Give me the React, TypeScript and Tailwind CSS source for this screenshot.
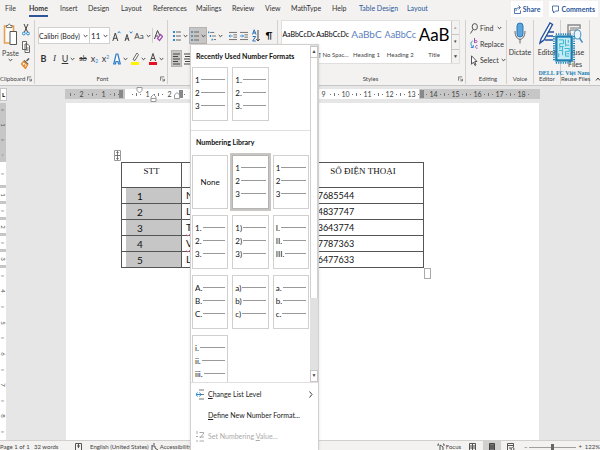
import React from 'react';

interface TabItem {
  label: string;
  active?: boolean;
  contextual?: boolean;
}

const TABS: TabItem[] = [
  { label: 'File' },
  { label: 'Home', active: true },
  { label: 'Insert' },
  { label: 'Design' },
  { label: 'Layout' },
  { label: 'References' },
  { label: 'Mailings' },
  { label: 'Review' },
  { label: 'View' },
  { label: 'MathType' },
  { label: 'Help' },
  { label: 'Table Design', contextual: true },
  { label: 'Layout', contextual: true },
];

const STYLES = [
  { sample: 'AaBbCcDc', name: '¶ Normal', cls: 'text-[7px] text-black' },
  { sample: 'AaBbCcDc', name: '¶ No Spac...', cls: 'text-[7px] text-black' },
  { sample: 'AaBbC', name: 'Heading 1', cls: 'text-[10px] text-[#5a80bd]' },
  { sample: 'AaBbCc', name: 'Heading 2', cls: 'text-[9px] text-[#5a80bd]' },
  { sample: 'AaB', name: 'Title', cls: 'text-[17px] text-black' },
];

const ROWS = [
  { id: 1, name: 'Nam', phone: '0387685544' },
  { id: 2, name: 'Lan', phone: '0344837747' },
  { id: 3, name: 'Thu', phone: '0973643774', typo: true },
  { id: 4, name: 'Vinh', phone: '0347787363', typo: true },
  { id: 5, name: 'Linh', phone: '0386477633' },
];

const RECENT = [
  ['1', '2', '3'],
  ['1.', '2.', '3.'],
];

const LIBRARY = [
  [],
  ['1', '2', '3'],
  ['1', '2', '3'],
  ['1.', '2.', '3.'],
  ['1)', '2)', '3)'],
  ['I.', 'II.', 'III.'],
  ['A.', 'B.', 'C.'],
  ['a)', 'b)', 'c)'],
  ['a.', 'b.', 'c.'],
  ['i.', 'ii.', 'iii.'],
];

const RULER = ['2', '1', '', '1', '2', '3', '4', '5', '6', '7', '8', '9', '10', '11', '12', '13', '14', '15', '16', '17', '18'];

const Chevron = () => (
  <svg width="5" height="4" viewBox="0 0 5 4" className="shrink-0" fill="none" stroke="#444" strokeWidth="1">
    <path d="M.7 1 2.5 2.8 4.3 1" />
  </svg>
);

const Launcher = () => (
  <button aria-label="More options" className="absolute right-[2px] bottom-[2px]">
    <svg width="5" height="6" viewBox="0 0 6 6" fill="none" stroke="#555" strokeWidth=".9">
      <path d="M.5 5V.5H5M2.3 2.3 5 5M5.3 2.8v2.5H2.8" />
    </svg>
  </button>
);

interface GroupProps {
  label: string;
  className?: string;
  launcher?: boolean;
  children: React.ReactNode;
}

const Group: React.FC<GroupProps> = ({ label, className = '', launcher, children }) => (
  <section className={`relative flex shrink-0 flex-col border-r border-[#d2d0ce] ${className}`}>
    <div className="flex-1">{children}</div>
    <div className="h-[11px] text-center text-[6px] leading-[11px] whitespace-nowrap text-[#444]">{label}</div>
    {launcher && <Launcher />}
  </section>
);

interface ToolProps {
  label: string;
  className?: string;
  menu?: boolean;
  children: React.ReactNode;
}

const Tool: React.FC<ToolProps> = ({ label, className = 'w-[11px]', menu, children }) => (
  <button aria-label={label} className={`flex h-[17px] shrink-0 items-center justify-center gap-[2px] ${className}`}>
    {children}
    {menu && <Chevron />}
  </button>
);

const ListIcon = ({ dots }: { dots: string }) => (
  <svg width="8" height="12" viewBox="0 0 8 12" className="shrink-0">
    <path d="M0 2h2M0 6h2M0 10h2" stroke={dots} strokeWidth="2" />
    <path d="M3 2H8M3 6H8M3 10H8" stroke="#666" />
  </svg>
);

const IndentIcon = ({ flip }: { flip?: boolean }) => (
  <svg width="8" height="10" viewBox="0 0 9 10">
    <path d="M0 1h9M5 3.7h4M5 6.3h4M0 9h9" stroke="#666" />
    <path d={flip ? 'M0 5h4M2.5 3.5 4 5 2.5 6.5' : 'M4 5H0M1.5 3.5 0 5l1.5 1.5'} stroke="#2b8ad0" fill="none" />
  </svg>
);

const Ribbon = () => (
  <div className="flex h-[68px] shrink-0 border-b border-[#c8c6c4] bg-[#f3f2f1] pt-[2px] pb-[1px]">
    <Group label="Clipboard" launcher className="w-[35px] pr-[9px]">
      <div className="flex pt-[3px]">
        <button className="flex w-[21px] shrink-0 flex-col items-center text-[7px] leading-[9px] text-[#444]">
          <svg width="15" height="23" viewBox="0 0 15 23" fill="none">
            <path d="M1.500 3h9v17h-9z" stroke="#e8a04c" strokeWidth="1.600" fill="#fafafa" />
            <path d="M3.500 4.500V2.500h1.500C5 .6 7.500.6 7.500 2.500H9v2z" fill="#fff" stroke="#666" strokeWidth=".9" />
            <path d="M7 8.500h6.500v13H7z" fill="#fff" stroke="#555" />
          </svg>
          <span className="pt-[3px]">Paste</span>
          <Chevron />
        </button>
        <div className="flex flex-col items-center gap-[5px] pt-[1px]">
          <button aria-label="Cut">
            <svg width="8" height="12" viewBox="0 0 8 12" fill="none">
              <path d="M2 0 5.500 8M6 0 2.500 8" stroke="#444" />
              <circle cx="1.800" cy="9.500" r="1.400" stroke="#2b8ad0" />
              <circle cx="6" cy="9.500" r="1.400" stroke="#2b8ad0" />
            </svg>
          </button>
          <button aria-label="Copy">
            <svg width="8" height="12" viewBox="0 0 8 12" fill="#fff" stroke="#555" strokeWidth=".9">
              <path d="M.5.5h4v8h-4zM3 3h2.500l2 2v6.500H3z" />
              <path d="M4 7h2.500M4 9h2.500" />
            </svg>
          </button>
          <button aria-label="Format Painter">
            <svg width="9" height="11" viewBox="0 0 9 11">
              <path d="M5.500 3 8 .500" stroke="#555" strokeWidth="1.500" />
              <path d="M3 2.500 7 6.500" stroke="#555" strokeWidth="1.500" />
              <path d="M2.500 3.500.500 6l4 4.500L6.500 7z" fill="#fff" stroke="#e58a2c" strokeWidth="1.300" />
              <path d="M1.500 7.500 4 6l1 3z" fill="#e58a2c" />
            </svg>
          </button>
        </div>
      </div>
    </Group>

    <Group label="Font" launcher className="w-[133px] pl-[3px]">
      <div className="flex flex-col gap-[6px] pt-[7px]">
        <div className="flex items-center">
          <div className="relative flex h-[17px] w-[52px] items-center border border-[#d2d0ce] bg-white">
            <select aria-label="Font" className="w-full appearance-none text-[7px] leading-[14px] text-[#222]">
              <option>Calibri (Body)</option>
            </select>
            <span className="pointer-events-none absolute right-[1px]"><Chevron /></span>
          </div>
          <div className="relative flex h-[17px] w-[20px] items-center border border-l-0 border-[#d2d0ce] bg-white">
            <select aria-label="Font Size" className="w-full appearance-none px-[1px] text-[8px] leading-[14px] text-[#222]">
              <option>11</option>
            </select>
            <span className="pointer-events-none absolute right-[1px]"><Chevron /></span>
          </div>
          <Tool label="Grow Font" className="w-[12px]">
            <svg width="9" height="12" viewBox="0 0 9 12" fill="none">
              <path d="M.8 11 3.300 3 5.800 11M1.600 8.300H5" stroke="#444" />
              <path d="m5.800 3.200 1.300-1.700 1.300 1.700" stroke="#2b8ad0" />
            </svg>
          </Tool>
          <Tool label="Shrink Font" className="w-[12px]">
            <svg width="9" height="12" viewBox="0 0 9 12" fill="none">
              <path d="M1 11 3 4.500 5 11M1.700 8.800h2.600" stroke="#444" />
              <path d="m5.800 1.500 1.300 1.700 1.300-1.700" stroke="#2b8ad0" />
            </svg>
          </Tool>
          <Tool label="Change Case" className="w-[17px]" menu>
            <span className="text-[8px] text-[#444]">Aa</span>
          </Tool>
          <div className="ml-[1px] h-[15px] w-px bg-[#d2d0ce]" />
          <Tool label="Clear Formatting" className="w-[10px]">
            <svg width="9" height="13" viewBox="0 0 9 13" fill="none">
              <path d="M.5 10 3.500 1.500 6 7M1.500 7H4" stroke="#444" />
              <path d="m3.500 9.500 3-4L8.500 7.500l-3 4z" fill="#fff" stroke="#a24fb4" strokeWidth="1.300" />
            </svg>
          </Tool>
        </div>
        <div className="flex items-center text-[9px] text-[#333]">
          <Tool label="Bold"><b>B</b></Tool>
          <Tool label="Italic"><i className="font-['Liberation_Serif',serif]">I</i></Tool>
          <Tool label="Underline" className="w-[17px]" menu><u>U</u></Tool>
          <Tool label="Strikethrough" className="w-[12px]"><s className="text-[7px]">ab</s></Tool>
          <Tool label="Subscript"><span>x<sub className="text-[5px] text-[#2b8ad0]">2</sub></span></Tool>
          <Tool label="Superscript"><span>x<sup className="text-[5px] text-[#2b8ad0]">2</sup></span></Tool>
          <Tool label="Text Effects" className="w-[18px]" menu>
            <svg width="8" height="12" viewBox="0 0 8 12" fill="#fff" stroke="#2a7cc7" strokeWidth="1.200" strokeLinejoin="round">
              <path d="M.7 11 3.200 1h1.600l2.500 10H5.600L5 8.500H3L2.400 11z" />
            </svg>
          </Tool>
          <Tool label="Text Highlight Color" className="w-[18px]" menu>
            <svg width="8" height="13" viewBox="0 0 8 13">
              <path d="M2 7.500 6 1l1.500 1.500L4 8.500z" fill="#fff" stroke="#666" />
              <path d="M0 11.500h8" stroke="#fff200" strokeWidth="3" />
            </svg>
          </Tool>
          <Tool label="Font Color" className="w-[18px]" menu>
            <svg width="8" height="13" viewBox="0 0 8 13" fill="none">
              <path d="M1.500 9 4 1.500 6.500 9M2.300 6.500h3.400" stroke="#444" />
              <path d="M0 11.500h8" stroke="#e81123" strokeWidth="3" />
            </svg>
          </Tool>
        </div>
      </div>
    </Group>

    <Group label="Paragraph" className="w-[110px] pl-[3px]">
      <div className="flex flex-col gap-[6px] pt-[7px]">
        <div className="flex items-center">
          <Tool label="Bullets" className="w-[18px]" menu><ListIcon dots="#2b8ad0" /></Tool>
          <Tool label="Numbering" className="w-[18px] border border-[#b5b3b1] bg-[#c8c6c4]" menu><ListIcon dots="#5d93bd" /></Tool>
          <Tool label="Multilevel List" className="w-[17px]" menu>
            <svg width="8" height="12" viewBox="0 0 9 12">
              <path d="M0 2h1.500M2 6h1.500M4 10h1.500" stroke="#2b8ad0" strokeWidth="2" />
              <path d="M2.500 2H7M4.500 6H9M6.500 10H9" stroke="#666" />
            </svg>
          </Tool>
          <Tool label="Decrease Indent" className="ml-[3px] w-[11px]"><IndentIcon /></Tool>
          <Tool label="Increase Indent"><IndentIcon flip /></Tool>
          <Tool label="Sort" className="ml-[2px] w-[10px]">
            <svg width="8" height="13" viewBox="0 0 8 13" fill="none">
              <path d="M.5 5.500 2.200.800 4 5.500M1 4h2.500M.700 7.500h3L.700 12h3" stroke="#2b70b0" />
              <path d="M6 1v11M4.300 10 6 12l1.700-2" stroke="#444" />
            </svg>
          </Tool>
          <Tool label="Show Marks" className="ml-[3px] w-[10px]"><span className="text-[10px]">¶</span></Tool>
        </div>
        <div className="flex items-center">
          <Tool label="Align Left" className="w-[11px] border border-[#b5b3b1] bg-[#c8c6c4]">
            <svg width="7" height="12" viewBox="0 0 7 12" stroke="#444"><path d="M0 1h7M0 3.500h5M0 6h7M0 8.500h5M0 11h7" /></svg>
          </Tool>
          <Tool label="Center">
            <svg width="7" height="12" viewBox="0 0 7 12" stroke="#444"><path d="M0 1h7M1 3.500h5M0 6h7M1 8.500h5M0 11h7" /></svg>
          </Tool>
        </div>
      </div>
    </Group>

    <Group label="Styles" launcher className="min-w-[188px] flex-1 pr-[5px] pl-[3px]">
      <div className="flex h-[44px] border border-[#e1dfdd] bg-white">
        {STYLES.map((s) => (
          <button key={s.name} className="flex w-[34px] flex-auto flex-col items-center">
            <span className={`flex h-[27px] items-center whitespace-nowrap ${s.cls}`}>{s.sample}</span>
            <span className="text-[6px] leading-[13px] whitespace-nowrap text-[#444]">{s.name}</span>
          </button>
        ))}
        <div className="flex w-[8px] shrink-0 flex-col divide-y divide-[#c8c6c4] border-l border-[#c8c6c4] bg-[#f3f2f1] text-[5px] text-[#444]">
          <button aria-label="Row up" className="flex-1 text-[#aaa]">▴</button>
          <button aria-label="Row down" className="flex-1">▾</button>
          <button aria-label="More styles" className="flex-1">▼</button>
        </div>
      </div>
    </Group>

    <Group label="Editing" className="w-[41px] pl-[4px]">
      <div className="flex flex-col text-[7px] text-[#333]">
        <button className="flex h-[16px] items-center gap-[2px]">
          <svg width="8" height="11" viewBox="0 0 8 11" fill="none" stroke="#555"><ellipse cx="4.800" cy="3.800" rx="2.600" ry="3.200" /><path d="M3 6.500.500 10.500" /></svg>
          Find <span className="ml-[2px]"><Chevron /></span>
        </button>
        <button className="flex h-[16px] items-center gap-[2px]">
          <svg width="8" height="12" viewBox="0 0 8 12" fill="none">
            <path d="M4.500 0v5M4.500 3.500c0-1.500 2.500-1.500 2.500 0s-2.500 1.500-2.500 0M7.500 7.500c-2.500-.8-2.500 3.500 0 2.700" stroke="#a24fb4" />
            <path d="M2.500 3C.500 4 .500 7 2.500 9M.800 9.500h2.500V7" stroke="#2b8ad0" />
          </svg>
          Replace
        </button>
        <button className="flex h-[16px] items-center gap-[2px]">
          <svg width="8" height="11" viewBox="0 0 8 11" fill="#fff" stroke="#555"><path d="M1.500.800v8.500L3.500 7l1.500 3.500L6 10 4.700 6.500H7z" /></svg>
          Select <Chevron />
        </button>
      </div>
    </Group>

    <Group label="Voice" className="w-[27px]">
      <button className="flex w-full flex-col items-center text-[7px] leading-[12px] text-[#333]">
        <svg width="12" height="26" viewBox="0 0 12 26" fill="none">
          <rect x="3" y="3" width="6" height="14" rx="3" fill="#5aa5dc" stroke="#2b78b8" />
          <path d="M1 11c0 11 10 11 10 0M6 19v4.500" stroke="#666" />
        </svg>
        Dictate
      </button>
    </Group>

    <Group label="Editor" className="w-[27px]">
      <button className="flex w-full flex-col items-center text-[7px] leading-[12px] text-[#333]">
        <svg width="16" height="26" viewBox="0 0 16 26" fill="none">
          <path d="M2 19 11 3l2.500 1.500L5 20l-4 3z" fill="#fff" stroke="#2552a0" strokeWidth="1.400" />
          <path d="M9 12h6M8 16h6M6 20h8" stroke="#2552a0" strokeWidth="1.400" />
        </svg>
        Editor
      </button>
    </Group>

    <Group label="Reuse Files" className="w-[29px]">
      <button className="flex w-full flex-col items-center text-[7px] leading-[12px] text-[#333]">
        <svg width="16" height="26" viewBox="0 0 16 26" fill="none">
          <path d="M1 20V5h12v4" stroke="#888" strokeWidth="1.400" />
          <path d="M3 8h9M3 20V10h8" stroke="#777" />
          <ellipse cx="10.500" cy="14.500" rx="3.300" ry="4.500" fill="#e9f3fb" stroke="#3b8bc4" />
          <path d="m12.500 18 3 4.500" stroke="#3b8bc4" strokeWidth="1.400" />
        </svg>
        Reuse<br />Files
      </button>
    </Group>

    <button aria-label="Collapse ribbon" className="ml-auto flex w-[10px] shrink-0 items-end justify-end pb-[3px]">
      <svg width="5" height="4" viewBox="0 0 5 4" fill="none" stroke="#444"><path d="m1 3.500 2-2.500 2 2.500" /></svg>
    </button>
  </div>
);

const Watermark = () => (
  <div className="pointer-events-none absolute top-[33px] right-[13px] flex w-[46px] flex-col items-center">
    <svg width="22" height="31" viewBox="0 0 23 32" fill="none">
      <path d="M3 1h17M3 31h17M1 3v26M22 3v26" stroke="#1c7fb4" strokeWidth="2" strokeDasharray="1.200 1.200" />
      <rect x="3.500" y="3.500" width="16" height="25" fill="#c5ebf5" stroke="#1c7fb4" strokeWidth="2.400" />
      <path
        d="M6 7h5v4H7v3h4M13 6.500v6h4M16 7v3M6 18h4v5M6 21v4M12 16h5v3h-4v5h4M14 21.500h3M13 14v-1M6 15.500h2M10 14v4"
        stroke="#35b3cf"
      />
    </svg>
    <span className="pt-[5px] font-['Liberation_Serif',serif] text-[6px] leading-[8px] font-bold whitespace-nowrap text-[#1c7fb4]">DELL FC Việt Nam</span>
  </div>
);

interface NumberTileProps {
  marks: string[];
  selected?: boolean;
}

const NumberTile: React.FC<NumberTileProps> = ({ marks, selected }) => (
  <button
    className={`flex h-[54px] flex-col border bg-white px-[2px] text-[8px] text-[#111] ${selected ? 'border-[#b5b3b1] outline-2 outline-[#c8c6c4]' : 'border-[#d2d0ce]'}`}
  >
    {marks.length === 0 && <span className="m-auto">None</span>}
    {marks.map((m, i) => (
      <span key={i} className="flex h-[13px] w-full items-center gap-[1px] first:mt-[5px]">
        {m}
        <span className="h-px flex-1 bg-[#999]" />
      </span>
    ))}
  </button>
);

const NumberingMenu = () => (
  <div className="absolute top-[44px] bottom-0 left-[190px] flex w-[129px] flex-col border-x border-t border-[#d2d0ce] bg-white shadow-sm">
    <div className="flex h-[338px] shrink-0 overflow-hidden border-b border-[#e1dfdd]">
      <div className="flex-1">
        <h2 className="pt-[5px] pl-[5px] text-[7px] leading-[12px] font-bold whitespace-nowrap text-[#111]">Recently Used Number Formats</h2>
        <div className="grid grid-cols-3 gap-[4px] px-[1px] pt-[5px] pb-[9px]">
          {RECENT.map((marks, i) => (
            <NumberTile key={i} marks={marks} />
          ))}
        </div>
        <h2 className="border-t border-[#e1dfdd] pt-[5px] pl-[5px] text-[7px] leading-[12px] font-bold text-[#111]">Numbering Library</h2>
        <div className="grid grid-cols-3 gap-x-[4px] gap-y-[6px] px-[1px] pt-[7px]">
          {LIBRARY.map((marks, i) => (
            <NumberTile key={i} marks={marks} selected={i === 1} />
          ))}
        </div>
      </div>
      <div className="flex w-[8px] shrink-0 flex-col bg-[#e1e1e1] pt-[1px] text-[5px] text-[#444]">
        <button aria-label="Scroll up" className="h-[12px] border border-[#c8c6c4] bg-white">▲</button>
        <div className="h-[240px] border-x border-[#d2d0ce] bg-white" />
        <button aria-label="Scroll down" className="mt-auto h-[12px] border border-[#c8c6c4] bg-white">▼</button>
      </div>
    </div>
    <div className="flex flex-col pt-[1px] text-[7px] whitespace-nowrap text-[#222]">
      <button className="flex h-[21px] items-center gap-[4px] px-[5px]">
        <svg width="8" height="11" viewBox="0 0 8 11" fill="none">
          <path d="M3 1h5M5 5.500h3M3 10h5" stroke="#777" />
          <path d="M0 5.500h5M1.500 3.500 0 5.500l1.500 2M3.500 3.500l1.500 2-1.500 2" stroke="#2b8ad0" />
        </svg>
        <span><u>C</u>hange List Level</span>
        <svg width="4" height="7" viewBox="0 0 4 7" className="ml-auto" fill="none" stroke="#444"><path d="m.5.500 2.500 3-2.500 3" /></svg>
      </button>
      <button className="flex h-[21px] items-center pr-[5px] pl-[17px]"><span><u>D</u>efine New Number Format...</span></button>
      <button disabled className="flex h-[21px] items-center gap-[4px] px-[5px] text-[#aaa]">
        <svg width="8" height="11" viewBox="0 0 8 11" fill="none" stroke="#aaa"><path d="M1 0v3M0 5.500h2M0 10h2M3.500 1.500H8M4 7l4-5M3.500 6H8M3.500 10H8" /></svg>
        <span>Set Numbering <u>V</u>alue...</span>
      </button>
    </div>
  </div>
);

const Marker = () => <span className="h-[8px] w-[4px] bg-[#888]" />;

const HorizontalRuler = () => (
  <div className="flex shrink-0 pt-[3px] pb-[4px]">
    <div className="-mt-[1px] -mb-[2px] flex w-[7px] items-center justify-center border border-[#c8c6c4] bg-white text-[6px] font-bold">L</div>
    <div className="relative ml-[58px] mr-[60px] flex h-[10px] flex-1 overflow-hidden bg-[#c6c6c6]">
      <div className="ml-[60px] w-[294px] bg-white" />
      <div className="absolute inset-0 flex items-center pl-[5px] text-[7px] leading-[10px] text-[#444]">
        {RULER.map((n, i) => (
          <div key={i} className="flex w-[22px] shrink-0 items-center justify-between">
            <span className="h-[3px] w-px bg-[#777]" />
            <span className="size-px bg-[#777]" />
            <span className="w-[8px] text-center">{n}</span>
            <span className="size-px bg-[#777]" />
            <span />
          </div>
        ))}
      </div>
      <div className="absolute inset-0 flex items-center">
        <span className="ml-[54px] flex"><Marker /></span>
        <span className="ml-[56px] flex"><Marker /></span>
        <span className="ml-[237px] flex"><Marker /></span>
      </div>
    </div>
    <svg width="45" height="16" viewBox="0 0 45 16" className="absolute top-[87px] left-[136px]" fill="#fff" stroke="#999">
      <path d="M1 .500h5v3L3.500 6 1 3.500zM15 14.500h5V10l-2.500-2.500L15 10zM38.500 11.500h5V8L41 5.500 38.500 8z" />
      <path d="M15 11.500h5" />
    </svg>
  </div>
);

const V_MARKS = ['ı', '1', 'ı', '·'];

const VerticalRuler = () => (
  <div className="flex w-[6px] shrink-0 flex-col items-center overflow-hidden bg-white text-[6px] leading-[8px] text-[#555]">
    <div className="flex h-[59px] w-full shrink-0 flex-col items-center justify-around bg-[#c6c6c6]">
      {V_MARKS.map((m, i) => (
        <span key={i} className="rotate-90">{m}</span>
      ))}
    </div>
    {['ı', '1', 'ı', '2', 'ı', '3'].map((m, i) => (
      <div
        key={i}
        className={`flex w-full shrink-0 items-center justify-center border-b-[3px] border-[#c6c6c6] ${i === 0 ? 'h-[26px]' : 'h-[16px]'}`}
      >
        <span className="rotate-90">{m}</span>
      </div>
    ))}
    <div className="flex w-full flex-1 flex-col items-center justify-around">
      {['ı', '4', 'ı', '5', 'ı', '6', 'ı', '7', 'ı', '8', 'ı'].map((m, i) => (
        <span key={i} className="rotate-90">{m}</span>
      ))}
    </div>
  </div>
);

const Document = () => (
  <div className="flex min-h-0 flex-1">
    <VerticalRuler />
    <div className="ml-[60px] mr-[61px] flex-1 overflow-hidden bg-white pt-[59px] pl-[55px]">
      <div className="relative w-[303px]">
        <table className="w-full table-fixed border-collapse border border-[#555] text-[10px] text-[#111]">
          <colgroup>
            <col className="w-[60px]" />
            <col className="w-[116px]" />
            <col />
          </colgroup>
          <thead>
            <tr className="h-[25px] border-b border-[#555] align-top font-['Liberation_Serif',serif] text-[9px] leading-[16px]">
              <th className="border-r border-[#555] font-normal">STT</th>
              <th className="border-r border-[#555] font-normal">HỌ TÊN</th>
              <th className="pl-[5px] font-normal">SỐ ĐIỆN THOẠI</th>
            </tr>
          </thead>
          <tbody>
            {ROWS.map((r) => (
              <tr key={r.id} className="h-[16px] border-b border-[#555] leading-[15px]">
                <td className="border-r border-[#555] p-0 pl-[4px]">
                  <div className="h-[15px] bg-[#c6c6c6] pt-[1px] pl-[11px] leading-[14px]">{r.id}</div>
                </td>
                <td className="border-r border-[#555] p-0 pl-[4px]">
                  <span className={r.typo ? 'underline decoration-[#e0607a] decoration-wavy decoration-1' : ''}>{r.name}</span>
                </td>
                <td className="p-0 pl-[4px] text-[9px]">{r.phone}</td>
              </tr>
            ))}
          </tbody>
        </table>
        <svg width="7" height="11" viewBox="0 0 7 11" className="absolute -top-[12px] -left-[7px]" fill="#fff" stroke="#555">
          <path d="M.5.500h6v10h-6z" stroke="#999" />
          <path d="M3.500 1.500v8M1 5.500h5M2.500 3l1-1.500 1 1.500M2.500 8l1 1.500 1-1.500" strokeWidth=".8" />
        </svg>
        <span className="absolute -right-[7px] -bottom-[11px] h-[11px] w-[7px] border border-[#aaa] bg-white" />
      </div>
    </div>
  </div>
);

const StatusBar = () => (
  <footer className="flex h-[10px] shrink-0 items-start overflow-hidden border-t border-[#d2d0ce] bg-[#f3f2f1] text-[6px] leading-[8px] whitespace-nowrap text-[#444]">
    <div className="flex pt-[2px]">
      <span className="w-[34px]">Page 1 of 1</span>
      <span className="w-[41px]">32 words</span>
      <svg width="7" height="8" viewBox="0 0 7 8" className="mr-[8px]" fill="none" stroke="#555"><path d="M.5 8V.500h6V8M3.500.500V5M2 3h3" /></svg>
      <span className="mr-[2px]">English (United States)</span>
      <svg width="8" height="8" viewBox="0 0 8 8" className="mr-[1px]" fill="none" stroke="#555"><path d="M1 7V2M1 3h3v2l3 2M3 0v2" /></svg>
      <span>Accessibility: Good</span>
    </div>
    <div className="ml-auto flex items-start">
      <svg width="8" height="9" viewBox="0 0 8 9" className="mt-[2px] mr-[1px]" fill="none" stroke="#555"><path d="M1 3V1h1M7 3V1H6M3 8V2l3 2v4" /></svg>
      <span className="w-[23px] pt-[2px]">Focus</span>
      <svg width="7" height="8" viewBox="0 0 7 8" className="mt-[2px] mr-[7px]" fill="none" stroke="#555"><path d="M.5 8V.500h6V8M3.500.500V8M1 3h5M1 5h5" /></svg>
      <span className="flex h-[10px] w-[18px] justify-center bg-[#d2d0ce] pt-[2px]">
        <svg width="6" height="8" viewBox="0 0 6 8" fill="#777" stroke="#444"><path d="M.5.500h5V8h-5zM1 3h4M1 5h4" /></svg>
      </span>
      <svg width="8" height="8" viewBox="0 0 8 8" className="mt-[2px] mr-[8px] ml-[6px]" fill="none" stroke="#555"><path d="M.5 7V.500h6V4M1 2.500h5M2 5h2" /><circle cx="5.500" cy="6" r="1.500" /></svg>
      <button className="w-[6px] pt-[2px]" aria-label="Zoom out">−</button>
      <input
        type="range"
        aria-label="Zoom"
        min={10}
        max={234}
        defaultValue={122}
        className="mt-[6px] h-[1px] w-[47px] appearance-none bg-[#a19f9d] [&::-webkit-slider-thumb]:h-[7px] [&::-webkit-slider-thumb]:w-[3px] [&::-webkit-slider-thumb]:appearance-none [&::-webkit-slider-thumb]:bg-[#666]"
      />
      <button className="w-[9px] pt-[2px]" aria-label="Zoom in">+</button>
      <span className="pt-[2px]">122%</span>
    </div>
  </footer>
);

export default function App() {
  return (
    <div className="relative flex h-screen flex-col overflow-hidden bg-[#e6e6e6] font-['Lato','Open_Sans',sans-serif]">
      <header className="flex h-[18px] shrink-0 items-center bg-[#f3f2f1]">
        <nav className="grid grid-cols-[24px_31px_28px_33px_32px_43px_36px_33px_26px_41px_27px_48px_30px] pl-[5px] text-[7px] leading-[14px]">
          {TABS.map((t, i) => (
            <a
              key={i}
              href="#"
              className={`justify-self-start border-b-2 whitespace-nowrap ${t.active ? 'border-[#2b579a] font-bold text-[#2b579a]' : 'border-transparent'} ${t.contextual ? 'text-[#2b579a]' : 'text-[#333]'}`}
            >
              {t.label}
            </a>
          ))}
        </nav>
        <div className="ml-auto flex gap-[6px] pr-[2px] text-[7px] leading-[15px] font-bold text-[#2b579a]">
          <button className="flex h-[16px] items-center gap-[2px] bg-white px-[3px]">
            <svg width="7" height="9" viewBox="0 0 7 9" fill="none" stroke="#2b579a"><path d="M2.500 3.500h-2v5h6v-3M2 6c0-2.500 1.500-3.500 4-3.500M4.500.500l2 2-2 2" strokeWidth=".8" /></svg>
            Share
          </button>
          <button className="flex h-[16px] items-center gap-[2px] bg-white px-[3px]">
            <svg width="7" height="9" viewBox="0 0 7 9" fill="none" stroke="#2b579a"><path d="M.5 1h6v5H3.500l-2 2V6h-1z" strokeWidth=".8" /></svg>
            Comments
          </button>
        </div>
      </header>
      <Ribbon />
      <HorizontalRuler />
      <Document />
      <StatusBar />
      <NumberingMenu />
      <Watermark />
    </div>
  );
}
